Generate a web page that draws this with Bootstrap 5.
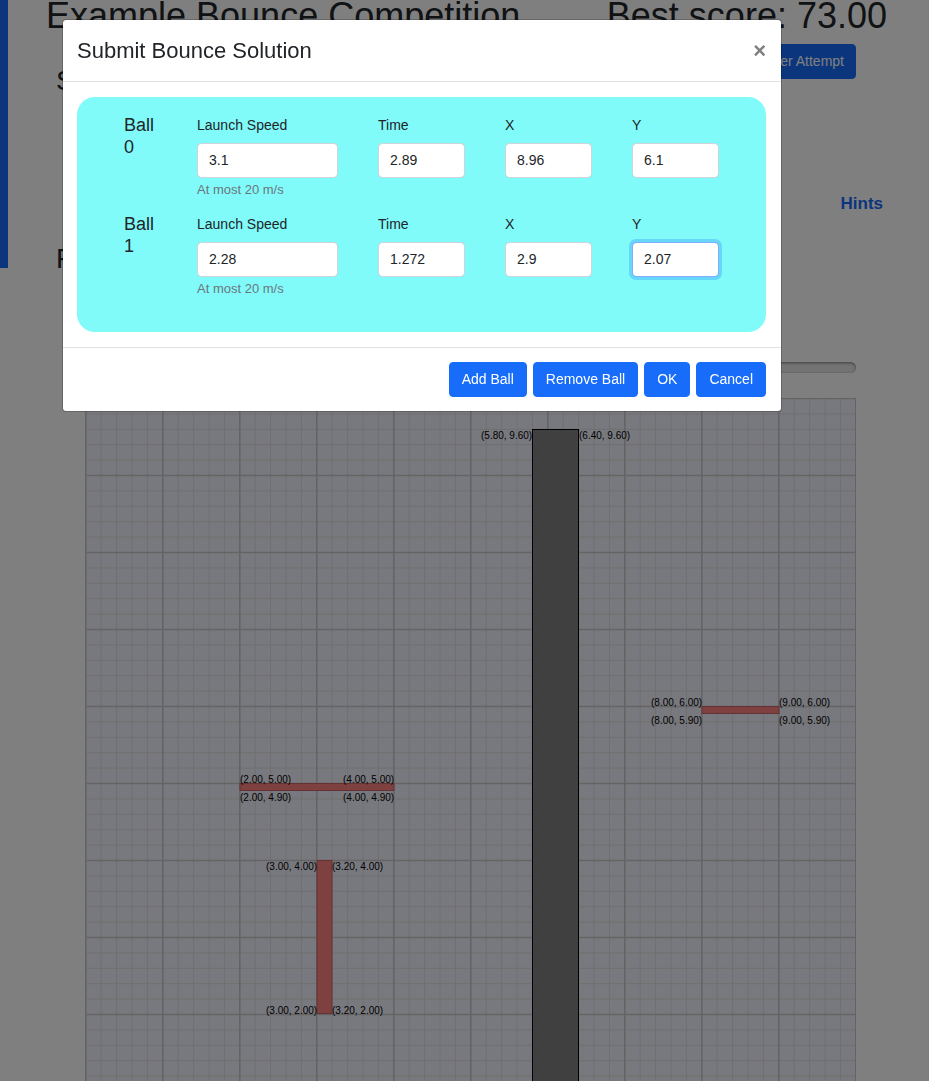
<!DOCTYPE html>
<html lang="en">
<head>
<meta charset="utf-8">
<meta name="viewport" content="width=device-width, initial-scale=1">
<title>Example Bounce Competition</title>
<link href="https://cdn.jsdelivr.net/npm/bootstrap@5.3.0/dist/css/bootstrap.min.css" rel="stylesheet">
<style>
  body { font-family: "Liberation Sans", Arial, sans-serif; font-size: 14px; color: #212529; }
  .page-title { font-size: 36px; line-height: 32px; font-weight: 400; margin: 0; }
  .section-title { font-size: 28px; line-height: 34px; font-weight: 400; margin: 0; }
  .page-shell { padding: 0 42px 0 46px; }
  .side-strip { position: absolute; left: 0; top: 0; width: 8px; height: 268px; background: #176dfa; }
  .btn-action { --bs-btn-bg: #176dfa; --bs-btn-border-color: #176dfa; --bs-btn-color: #fff; --bs-btn-font-size: 14px; --bs-btn-padding-x: 11px; --bs-btn-padding-y: 6px; --bs-btn-line-height: 21px; --bs-btn-border-radius: 4px; --bs-btn-hover-bg: #0b5ed7; --bs-btn-hover-color: #fff; }
  .modal-footer .btn-action { --bs-btn-padding-x: 12px; }
  .attempt-row { padding: 12px 31px 0 10px; }
  .attempt-row .section-title { padding-top: 20px; }
  .hint-row { padding-top: 94px; }
  .hint-link { font-size: 17px; line-height: 24px; font-weight: 700; color: #176dfa; text-decoration: none; }
  .run-row { padding: 26px 10px 86px; }
  .stage { padding: 0 31px 0 39px; }
  .time-track { height: 11px; border-radius: 6px; background: #e6e6e6; box-shadow: inset 0 1px 3px rgba(0,0,0,.45); }
  .bounce-board { display: block; width: 100%; height: auto; margin-top: 25px; }
  .bounce-board text { font-size: 10px; fill: #000; }
  .bounce-modal { padding-right: 85px; }
  .bounce-modal .modal-dialog { max-width: 720px; margin: 19px auto; }
  .bounce-modal .modal-content { border: 1px solid rgba(0,0,0,.2); border-radius: 4px; }
  .bounce-modal .modal-header { padding: 15px 15px 14px 14px; border-color: #dee2e6; }
  .bounce-modal .modal-title { font-size: 22px; line-height: 32px; }
  .close-x { border: 0; background: none; font-size: 22px; line-height: 22px; font-weight: 700; color: #7f7f7f; padding: 0; }
  .bounce-modal .modal-body { padding: 15px 15px 15px 14px; }
  .bounce-modal .modal-footer { padding: 14px 15px 14px 14px; gap: 6px; border-color: #dee2e6; }
  .bounce-modal .modal-footer > * { margin: 0; }
  .ball-panel { background: #80fbf9; border-radius: 18px; padding: 17px 47px 20px; }
  .ball-row { display: grid; grid-template-columns: 33px 141fr 87fr 87fr 87fr; column-gap: 40px; height: 99px; }
  .ball-name { font-size: 18px; line-height: 22px; font-weight: 400; margin: 0; }
  .ball-row label { display: block; line-height: 22px; margin-bottom: 7px; }
  .ball-row .form-control { font-size: 14px; line-height: 21px; padding: 6px 11px; border-color: #ced4da; border-radius: 4px; }
  .ball-row .form-control.current { border-color: #80aefd; box-shadow: 0 0 0 3px rgba(23,109,250,.25); }
  .help-note { font-size: 13px; line-height: 18px; margin-top: 3px; color: #6c757d; white-space: nowrap; }
</style>
<script src="https://cdn.jsdelivr.net/npm/bootstrap@5.3.0/dist/js/bootstrap.bundle.min.js"></script>
</head>
<body class="overflow-hidden vh-100">
<div class="side-strip"></div>
<main class="page-shell">
  <div class="d-flex justify-content-between">
    <h1 class="page-title">Example Bounce Competition</h1>
    <p class="page-title">Best score: 73.00</p>
  </div>
  <div class="attempt-row d-flex justify-content-between align-items-start">
    <h2 class="section-title">Story</h2>
    <button type="button" class="btn btn-action">Another Attempt</button>
  </div>
  <div class="hint-row d-flex justify-content-end pe-1">
    <a href="#hints" class="hint-link">Hints</a>
  </div>
  <div class="run-row"><h2 class="section-title">Field</h2></div>
  <div class="stage">
    <div class="time-track"></div>
    <svg class="bounce-board" viewBox="0 0 771 771" role="img" aria-label="Bounce field">
      <rect width="771" height="771" fill="#f1f1ff"/>
      <g id="grid"></g>
      <rect x="447.5" y="31.5" width="46" height="740" fill="#808080" stroke="#000"/>
      <g fill="#ff8080" stroke="#c86464">
        <rect x="617" y="308.5" width="77" height="7"/>
        <rect x="155" y="385.5" width="154" height="7"/>
        <rect x="232" y="462.5" width="15" height="153"/>
      </g>
      <g id="fieldLabels">
      <text x="396" y="41">(5.80, 9.60)</text><text x="494" y="41">(6.40, 9.60)</text>
      <text x="566" y="308">(8.00, 6.00)</text><text x="694" y="308">(9.00, 6.00)</text>
      <text x="566" y="326">(8.00, 5.90)</text><text x="694" y="326">(9.00, 5.90)</text>
      <text x="155" y="385">(2.00, 5.00)</text><text x="258" y="385">(4.00, 5.00)</text>
      <text x="155" y="403">(2.00, 4.90)</text><text x="258" y="403">(4.00, 4.90)</text>
      <text x="181" y="472">(3.00, 4.00)</text><text x="247" y="472">(3.20, 4.00)</text>
      <text x="181" y="616">(3.00, 2.00)</text><text x="247" y="616">(3.20, 2.00)</text>
      </g>
    </svg>
  </div>
</main>

<div class="modal-backdrop show"></div>
<div class="modal d-block bounce-modal overflow-hidden" role="dialog" aria-modal="true" aria-labelledby="dialogTitle">
  <div class="modal-dialog">
    <form class="modal-content">
      <div class="modal-header">
        <h5 class="modal-title" id="dialogTitle">Submit Bounce Solution</h5>
        <button type="button" class="close-x" aria-label="Close">×</button>
      </div>
      <div class="modal-body">
        <div class="ball-panel">
          <div class="ball-row">
            <h5 class="ball-name">Ball 0</h5>
            <div><label for="speed0">Launch Speed</label><input id="speed0" class="form-control" value="3.1"><div class="help-note">At most 20 m/s</div></div>
            <div><label for="time0">Time</label><input id="time0" class="form-control" value="2.89"></div>
            <div><label for="x0">X</label><input id="x0" class="form-control" value="8.96"></div>
            <div><label for="y0">Y</label><input id="y0" class="form-control" value="6.1"></div>
          </div>
          <div class="ball-row">
            <h5 class="ball-name">Ball 1</h5>
            <div><label for="speed1">Launch Speed</label><input id="speed1" class="form-control" value="2.28"><div class="help-note">At most 20 m/s</div></div>
            <div><label for="time1">Time</label><input id="time1" class="form-control" value="1.272"></div>
            <div><label for="x1">X</label><input id="x1" class="form-control" value="2.9"></div>
            <div><label for="y1">Y</label><input id="y1" class="form-control current" value="2.07"></div>
          </div>
        </div>
      </div>
      <div class="modal-footer">
        <button type="button" class="btn btn-action">Add Ball</button>
        <button type="button" class="btn btn-action">Remove Ball</button>
        <button type="button" class="btn btn-action">OK</button>
        <button type="button" class="btn btn-action">Cancel</button>
      </div>
    </form>
  </div>
</div>
<script>
  // Field grid: ten metres each way, a fine line every 0.2 m
  const unit = 77;
  let fine = "", coarse = "";
  for (let i = 0; i <= 50; i++) {
    const p = i * unit / 5;
    const line = `M0 ${p + 0.5}H771M${p + 0.8} 0V771`;
    if (i % 5) fine += line; else coarse += line;
  }
  document.getElementById("grid").innerHTML =
    `<path d="${fine}" stroke="#e2dfdb"/><path d="${coarse}" stroke="#c8c8c8" stroke-width="1.6"/>`;
</script>
</body>
</html>
